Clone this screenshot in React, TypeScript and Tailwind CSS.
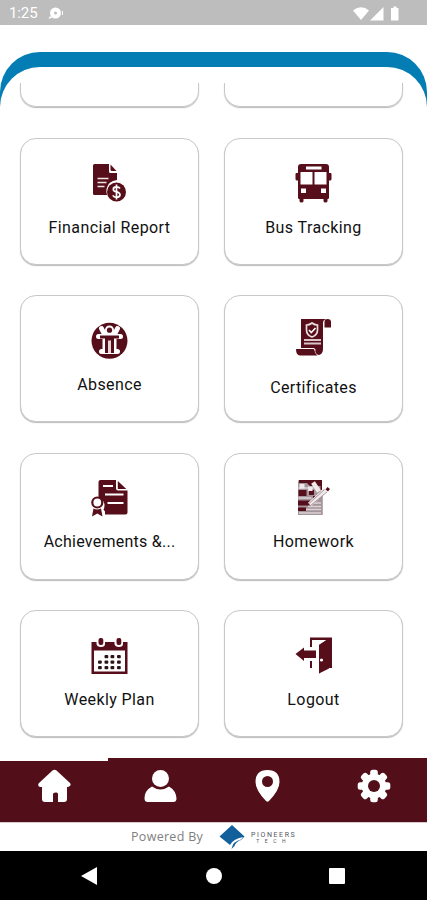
import type { ReactNode } from 'react';
import clsx from 'clsx';

const MAROON = '#560f1a';

interface MenuItem {
  label: string;
  icon: ReactNode;
  iconClass?: string;
  labelClass?: string;
}

function Icon({ children }: { children: ReactNode }) {
  return (
    <svg width="41" height="41" viewBox="0 0 41 41" fill={MAROON}>
      {children}
    </svg>
  );
}

function ReportIcon() {
  return (
    <Icon>
      <path d="M5.5 2h14.5v7.500q0 1.500 1.500 1.500H28v7q-9 1-10.500 9-.5 3 .6 6H5.500q-1.500 0-1.500-1.500v-28Q4 2 5.500 2Z" />
      <path d="M21.500 2.500 27.500 9h-4.500q-1.500 0-1.500-1.500Z" />
      <path d="M8.500 16.500h11M8.500 20.500h9M8.500 24.500h7" stroke="#eee2e2" strokeWidth="1.700" />
      <circle cx="27.500" cy="30" r="9.500" />
      <path d="M31 26.500q-1-1.700-3.500-1.700-3.200 0-3.200 2.400 0 2 3.200 2.700 3.500.8 3.500 2.900 0 2.500-3.500 2.500-2.600 0-3.700-2M27.500 22.500v15" fill="none" stroke="#fff" strokeWidth="1.700" />
    </Icon>
  );
}

function BusIcon() {
  return (
    <Icon>
      <path d="M8 2h25q3 0 3 3v6h1.500q1 0 1 1v5q0 1.500-1.500 1.500h-1V36q0 1-1.500 1v2q0 1.500-2 1.500T30.500 39v-2h-20v2q0 1.500-2 1.500t-2-1.500v-2Q5 37 5 36V18.500H4q-1.500 0-1.500-1.500v-5q0-1 1-1H5V5q0-3 3-3Z" />
      <path d="M13 4.500h15.500v3H13ZM7.500 10h12v12.500h-12ZM21.500 10h12v12.500h-12ZM8 26.500h5v4.500H8ZM28 26.500h5v4.500h-5Z" fill="#fff" />
    </Icon>
  );
}

function AbsenceIcon() {
  return (
    <Icon>
      <circle cx="20.500" cy="20.800" r="18" />
      {/* white silhouette, then the figure inside it */}
      <path
        d="M12.500 8.500l2 4M28.500 8.500l-2 4M9.500 16.500h22M16 17v14M25 17v14M12.500 31.500h16"
        fill="none"
        stroke="#fff"
        strokeWidth="5"
        strokeLinecap="round"
        strokeLinejoin="round"
      />
      <path d="M15 11h11v21H15Z" fill="#fff" />
      <circle cx="20.500" cy="10" r="4.500" fill="#fff" />
      <circle cx="20.500" cy="10.200" r="2.600" />
      <path d="M11 15.500h19v3h-5V33h-9V18.500h-5Z" />
      <path d="M19 20.500h3V33h-3Z" fill="#e5d7d9" />
    </Icon>
  );
}

function CertificateIcon() {
  return (
    <Icon>
      <path d="M8 2h25q-3 1-3 4v26q0 5-4 6-4-.5-4-6H8Z" />
      <path d="M3 32h18.500q0 4 3 6.500H7Q3 38 3 32Z" />
      <path d="M34.500 2Q38 2 38 5v5.500h-6.500V5q0-3 3-3Z" />
      <path d="M19 6q2.500 2 5.500 2v5q0 5-5.500 7-5.500-2-5.500-7V8Q16.500 8 19 6Z" fill={MAROON} stroke="#eadcdc" strokeWidth="1.700" />
      <path d="m16 13 2.300 2.500 4.200-4.500" fill="none" stroke="#fff" strokeWidth="1.600" />
      <path d="M11 23h17M11 26.500h17" stroke="#d9c5c7" strokeWidth="1.800" />
      <path d="M4 31.500h17q1 0 1 2" fill="none" stroke="#fff" strokeWidth="1" />
    </Icon>
  );
}

function AwardIcon() {
  return (
    <Icon>
      <path d="M11.500 2H27v8.500q0 2 2 2h9.500v22q0 2-2 2H16v-3l-1.500-2q2-4 0-8-1.500-3-5-3.500V4q0-2 2-2Z" />
      <path d="m28.800 3 8.500 8h-8.500Z" />
      <path d="M14 8h10M16 16.500h18.500M18.500 25h16" stroke="#fff" strokeWidth="2" />
      <circle cx="8.300" cy="24.500" r="5" fill="#fff" stroke={MAROON} strokeWidth="2.200" />
      <path d="M4.500 30.500q3.500 2 7.500 0l1.500 8-5.200-3-5.300 3Z" />
    </Icon>
  );
}

function HomeworkIcon() {
  return (
    <Icon>
      <path d="M5 2.500h23.500V37H5Z" fill="#a3939a" />
      <path d="M6 2h23v6H17l-3-3H6ZM27.500 3h1.500v9h-1.500ZM5.500 12h8v6h-8ZM16 12h5v5h-5ZM5 22.500h12v5H5ZM5 29.500h8v3.500H5ZM20 18h7v3h-7Z" />
      <path d="M5.500 10h15M5.500 20h13M19 25h9M15 28.500h13M13 31.500h15M6 35h22" stroke="#ddd3d6" strokeWidth="1.400" />
      <path d="M6.500 6h5v4.500h-5ZM15 8.500h4.500V13H15Z" fill="#efe7e9" />
      <path d="M29 16v21" stroke="#8a747b" strokeWidth="1.200" />
      <path d="m16.500 26.500 16-14.500M20 4.500l6 9" stroke="#f0e9ea" strokeWidth="4.500" />
      <path d="m17 28 17-14M16 25.500l15.500-14" stroke="#a28f95" strokeWidth=".9" />
      <path d="m34.500 9 2.500 2-2 2.500-2.500-2Z" />
    </Icon>
  );
}

function CalendarIcon() {
  const dots = [
    [15.5, 22], [21.5, 22], [28, 22],
    [9, 27.5], [15.5, 27.5], [21.5, 27.5], [28, 27.5],
    [9, 33], [15.5, 33], [21.5, 33], [28, 33],
  ];
  return (
    <Icon>
      <path d="M2.500 7h36v32h-36Z" />
      <path d="M5 15.500h31v21H5Z" fill="#fff" />
      <path d="M7.500 2h8.500v7q0 3-4 3t-4.500-3ZM25.500 2H34v7q0 3-4 3t-4.500-3Z" fill="#fff" />
      <rect x="9.500" y="3" width="4.800" height="7" rx="2" />
      <rect x="27.500" y="3" width="4.800" height="7" rx="2" />
      {dots.map(([x, y]) => (
        <rect key={`${x}-${y}`} x={x} y={y - 2} width="3.800" height="3.200" rx="1" fill="#2b1519" />
      ))}
    </Icon>
  );
}

function LogoutIcon() {
  return (
    <Icon>
      <path d="M17 2.500h22V33h-8.500L26 38.500V10L33.500 5H19v7h-2ZM17 26h2v7h-2Z" />
      <path d="M26 10 36 3.500v30L26 38.500Z" />
      <path d="m2.500 19 8.500-6.500v3h12v7.500H11v3Z" />
      <path d="M25.200 10v28" stroke="#fff" strokeWidth=".8" />
      <circle cx="28.500" cy="25" r="1.600" fill="#fff" />
    </Icon>
  );
}

const items: MenuItem[] = [
  { label: 'Financial Report', icon: <ReportIcon />, iconClass: 'pt-[23px]', labelClass: 'mt-[13px] tracking-[0.400px]' },
  { label: 'Bus Tracking', icon: <BusIcon />, iconClass: 'pt-[23px]', labelClass: 'mt-[13px] tracking-[0.400px]' },
  { label: 'Absence', icon: <AbsenceIcon />, labelClass: 'mt-3 tracking-[0.400px]' },
  { label: 'Certificates', icon: <CertificateIcon />, iconClass: 'pt-[21px]', labelClass: 'mt-[18px] tracking-[0.350px]' },
  { label: 'Achievements &...', icon: <AwardIcon />, labelClass: 'mt-[11px] tracking-[0.250px]' },
  { label: 'Homework', icon: <HomeworkIcon />, labelClass: 'mt-[11px] tracking-[0.400px]' },
  { label: 'Weekly Plan', icon: <CalendarIcon />, labelClass: 'mt-3 tracking-[0.400px]' },
  { label: 'Logout', icon: <LogoutIcon />, labelClass: 'mt-3 tracking-[0.400px]' },
];

function MenuCard({ label, icon, iconClass = 'pt-6', labelClass }: MenuItem) {
  return (
    <div className="flex h-[127px] flex-col items-center rounded-[16px] border border-[#c8c8c8] bg-white shadow-[0_1px_1px_#bbb]">
      <div className={iconClass}>{icon}</div>
      <span className={clsx('whitespace-nowrap text-[16px] leading-6 text-[#111]', labelClass)}>
        {label}
      </span>
    </div>
  );
}

function StatusBar() {
  return (
    <div className="flex h-[25px] items-center bg-[#bdbdbd] pt-0.5 pr-[27px] pl-[9px] text-white">
      <span className="text-[15px] leading-none tracking-[-0.1px]">1:25</span>
      <svg className="ml-[10px]" width="17" height="14" viewBox="0 0 17 14" fill="#fff">
        <circle cx="7.500" cy="6" r="5.500" />
        <path d="m2 9-1.500 3 4-1.500M14 4h1v4h-1Z" />
        <circle cx="7.500" cy="6" r="1.500" fill="#bdbdbd" />
      </svg>
      <svg className="ml-auto" width="48" height="16" viewBox="0 0 48 16" fill="#fff">
        <path d="M1 4.500Q9-2 17 4.500L9 14ZM31.500 1v13.500H18ZM39.500 2h2V.5h3V2h2v12.500h-7.500V2Z" />
      </svg>
    </div>
  );
}

function TabBar() {
  return (
    <nav className="grid h-16 grid-cols-4 bg-[#520f19]">
      <div className="-mr-px flex justify-center border-t-[3px] border-white pt-2">
        <svg width="34" height="34" viewBox="0 0 34 34" fill="#fff">
          <path d="M15.500 1.500q2-1.500 4 0L33 14q2 3-2 4h-1v12q0 3-3 3h-6v-8q0-1.500-1.500-1.500h-1Q16 23.500 16 25v8H8q-3 0-3-3V18H3q-3-1-1-4Z" />
        </svg>
      </div>
      <div className="flex justify-center pt-[11px]">
        <svg width="34" height="34" viewBox="0 0 34 34" fill="#fff">
          <circle cx="17.500" cy="9.500" r="8.500" />
          <path d="M9 17.500q8.500 6 17 0 7 4 7.500 12 0 3.500-3.500 3.500H5q-3.500 0-3.500-3.500 0-8 7.500-12Z" />
        </svg>
      </div>
      <div className="flex justify-center pt-[11px]">
        <svg width="26" height="34" viewBox="0 0 26 34" fill="#fff">
          <path fillRule="evenodd" d="M13.500 1q12 0 12 12 0 8-10.500 19-1.500 1.500-3 0Q1.500 21 1.500 13q0-12 12-12Zm0 6a5.500 5.500 0 1 0 0 11 5.500 5.500 0 0 0 0-11Z" />
        </svg>
      </div>
      <div className="flex justify-center pt-[11px]">
        <svg width="34" height="34" viewBox="-17 -17 34 34" fill="#fff">
          {[0, 45, 90, 135].map((a) => (
            <rect key={a} x="-3.800" y="-16.300" width="7.600" height="32.600" rx="2.500" transform={`rotate(${a})`} />
          ))}
          <circle r="12.300" />
          <circle r="6" fill="#520f19" />
        </svg>
      </div>
    </nav>
  );
}

function PoweredBy() {
  return (
    <div className="flex h-[29px] items-center border-t border-[#d8c8c9] pl-[131px]">
      <span className="w-[72px] whitespace-nowrap font-['Open_Sans',sans-serif] text-[12.500px] leading-4 tracking-[0.300px] text-[#808080]">
        Powered By
      </span>
      <svg className="ml-[15px]" width="28" height="26" viewBox="0 0 28 26" fill="#12609b">
        <path d="M14 1 26.500 12.500 22 17l3-4q-10 2-13 8L1.500 12.500Z" />
        <path d="M13.500 25q1-8 11-10-7 3-8 7Z" />
      </svg>
      <div className="ml-[5px] flex flex-col items-center pt-0.5 text-[#55555c]">
        <span className="text-[7px] leading-[7px] tracking-[1.600px]">PIONEERS</span>
        <span className="text-[5px] leading-[5px] tracking-[5.500px]">TECH</span>
      </div>
    </div>
  );
}

export default function App() {
  return (
    <div className="flex h-[900px] w-[427px] flex-col overflow-hidden bg-white font-[Roboto,sans-serif]">
      <StatusBar />

      {/* Header band + scrolled menu */}
      <main className="mt-[26.500px] h-[706.500px] rounded-t-[40px] bg-[#047db4] pt-[15.500px]">
        <div className="h-full rounded-t-[40px] bg-white pt-4">
          <div className="grid grid-cols-[179px_179px] gap-x-[25px] gap-y-[30.500px] pl-5">
            <div className="h-6 rounded-b-[16px] border border-t-0 border-[#c8c8c8] shadow-[0_1px_1px_#bbb]" />
            <div className="h-6 rounded-b-[16px] border border-t-0 border-[#c8c8c8] shadow-[0_1px_1px_#bbb]" />
            {items.map((item) => (
              <MenuCard key={item.label} {...item} />
            ))}
          </div>
        </div>
      </main>

      <TabBar />
      <PoweredBy />

      {/* Android navigation */}
      <div className="flex h-[49px] items-center bg-black pl-[81px]">
        <svg width="16" height="18" viewBox="0 0 16 18" fill="#fff">
          <path d="M16 0v18L0 9Z" />
        </svg>
        <div className="ml-[109px] size-4 rounded-full bg-white" />
        <div className="ml-[107px] size-4 rounded-[1px] bg-white" />
      </div>
    </div>
  );
}
